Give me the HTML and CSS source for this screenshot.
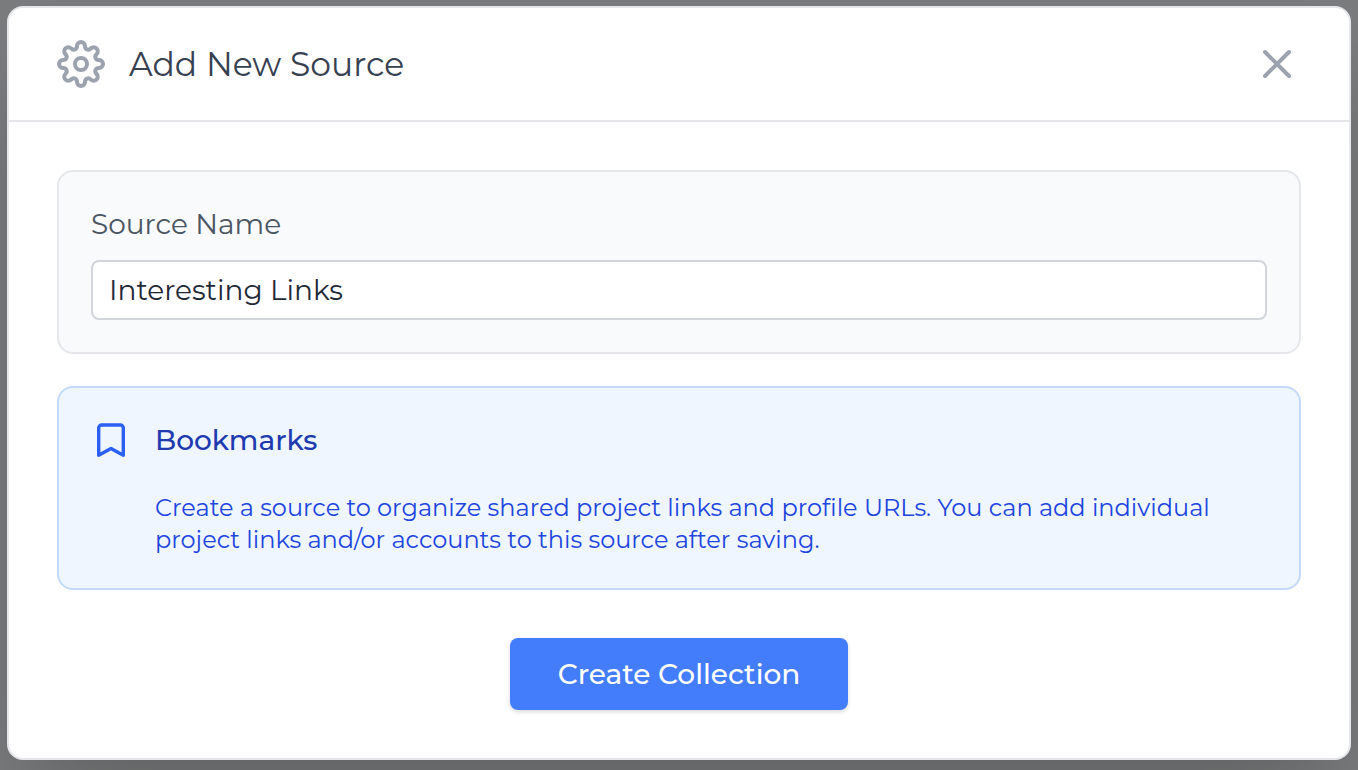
FILE: index.html
```
<!DOCTYPE html>
<html lang="en">
<head>
<meta charset="utf-8">
<meta name="viewport" content="width=device-width, initial-scale=1">
<title>Add New Source</title>
<link rel="stylesheet" href="styles.css">
</head>
<body>
<main class="backdrop">
  <form class="dialog" role="dialog" aria-labelledby="dialog-title">
    <header class="dialog-header">
      <svg class="gear-icon" viewBox="-24 -24 48 48" aria-hidden="true">
        <defs><path id="tooth" d="M-4-18a4 4 0 0 1 8 0C4-14.5 7.4-13.1 9.9-15.56"/></defs>
        <use href="#tooth"/>
        <use href="#tooth" transform="rotate(45)"/>
        <use href="#tooth" transform="rotate(90)"/>
        <use href="#tooth" transform="rotate(135)"/>
        <use href="#tooth" transform="rotate(180)"/>
        <use href="#tooth" transform="rotate(225)"/>
        <use href="#tooth" transform="rotate(270)"/>
        <use href="#tooth" transform="rotate(315)"/>
        <circle r="6"/>
      </svg>
      <h1 class="dialog-title" id="dialog-title">Add New Source</h1>
      <button class="close-button" type="button" aria-label="Close">
        <svg class="close-icon" viewBox="0 0 48 48" aria-hidden="true"><path d="M12 12l24 24M36 12L12 36"/></svg>
      </button>
    </header>
    <div class="dialog-body">
      <section class="panel">
        <label class="field-label" for="source-name">Source Name</label>
        <input class="field-input" id="source-name" type="text" value="Interesting Links">
      </section>
      <section class="panel panel-info">
        <svg class="bookmark-icon" viewBox="0 0 40 40" aria-hidden="true"><path d="M7.7 35.2V8a3 3 0 0 1 3-3h18.6a3 3 0 0 1 3 3v27.2L20 28.4z"/></svg>
        <div class="info-content">
          <h2 class="info-title">Bookmarks</h2>
          <p class="info-text">Create a source to organize shared project links and profile URLs. You can add individual project links and/or accounts to this source after saving.</p>
        </div>
      </section>
      <button class="submit-button" type="submit">Create Collection</button>
    </div>
  </form>
</main>
</body>
</html>
```
FILE: styles.css
```
* { box-sizing: border-box; }

body {
  margin: 0;
  font-family: Montserrat, Inter, sans-serif;
  background: #7b7c7d;
}

.backdrop {
  min-height: 100vh;
  padding: 6px 7px 10px;
  overflow: hidden;
}

.dialog {
  background: #fff;
  border: 2px solid #e5e7eb;
  border-radius: 16px;
  box-shadow: 0 50px 100px -24px rgba(0, 0, 0, 0.25);
}

.dialog-header {
  display: flex;
  align-items: center;
  gap: 24px;
  padding: 32px 48px;
  border-bottom: 2px solid #e5e7eb;
}

.gear-icon {
  width: 48px;
  height: 48px;
  fill: none;
  stroke: #9ca3af;
  stroke-width: 4;
  stroke-linecap: round;
}

.dialog-title {
  flex: 1;
  margin: 0;
  font-size: 33px;
  line-height: 48px;
  font-weight: 400;
  color: #374151;
}

.close-button {
  padding: 0;
  border: 0;
  background: none;
  cursor: pointer;
}

.close-icon {
  display: block;
  width: 48px;
  height: 48px;
  fill: none;
  stroke: #9ca3af;
  stroke-width: 4;
  stroke-linecap: round;
}

.dialog-body {
  display: flex;
  flex-direction: column;
  gap: 32px;
  padding: 48px;
}

.panel {
  padding: 32px;
  border: 2px solid #e5e7eb;
  border-radius: 16px;
  background: #f9fafb;
}

.field-label {
  display: block;
  margin-bottom: 16px;
  font-size: 28px;
  line-height: 40px;
  color: #4b5563;
}

.field-input {
  display: block;
  width: 100%;
  height: 60px;
  padding: 0 16px;
  border: 2px solid #d1d5db;
  border-radius: 8px;
  background: #fff;
  font-family: inherit;
  font-size: 28px;
  color: #1f2937;
}

.panel-info {
  display: flex;
  align-items: flex-start;
  gap: 24px;
  background: #eff6ff;
  border-color: #c3dafd;
}

.bookmark-icon {
  flex: none;
  width: 40px;
  height: 40px;
  fill: none;
  stroke: #2b5ff6;
  stroke-width: 3.4;
  stroke-linejoin: round;
}

.info-content { flex: 1; }

.info-title {
  margin: 0 0 32px;
  font-size: 28px;
  line-height: 40px;
  font-weight: 500;
  color: #203ab0;
}

.info-text {
  margin: 0;
  font-size: 24px;
  line-height: 32px;
  color: #2145de;
}

.submit-button {
  align-self: center;
  margin-top: 16px;
  padding: 16px 48px;
  border: 0;
  border-radius: 8px;
  background: #447dfc;
  box-shadow: 0 2px 4px rgba(0, 0, 0, 0.15);
  font-family: inherit;
  font-size: 28px;
  line-height: 40px;
  font-weight: 500;
  color: #fff;
  cursor: pointer;
}
```
